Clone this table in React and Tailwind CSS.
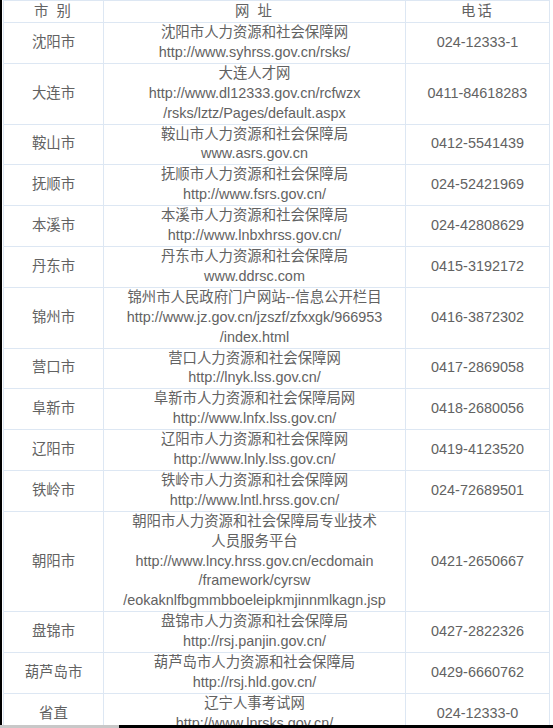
import React from "react";

const rows = [
  ["沈阳市", ["沈阳市人力资源和社会保障网", "http://www.syhrss.gov.cn/rsks/"], "024-12333-1"],
  ["大连市", ["大连人才网", "http://www.dl12333.gov.cn/rcfwzx", "/rsks/lztz/Pages/default.aspx"], "0411-84618283"],
  ["鞍山市", ["鞍山市人力资源和社会保障局", "www.asrs.gov.cn"], "0412-5541439"],
  ["抚顺市", ["抚顺市人力资源和社会保障局", "http://www.fsrs.gov.cn/"], "024-52421969"],
  ["本溪市", ["本溪市人力资源和社会保障局", "http://www.lnbxhrss.gov.cn/"], "024-42808629"],
  ["丹东市", ["丹东市人力资源和社会保障局", "www.ddrsc.com"], "0415-3192172"],
  ["锦州市", ["锦州市人民政府门户网站--信息公开栏目", "http://www.jz.gov.cn/jzszf/zfxxgk/966953", "/index.html"], "0416-3872302"],
  ["营口市", ["营口人力资源和社会保障网", "http://lnyk.lss.gov.cn/"], "0417-2869058"],
  ["阜新市", ["阜新市人力资源和社会保障局网", "http://www.lnfx.lss.gov.cn/"], "0418-2680056"],
  ["辽阳市", ["辽阳市人力资源和社会保障网", "http://www.lnly.lss.gov.cn/"], "0419-4123520"],
  ["铁岭市", ["铁岭市人力资源和社会保障网", "http://www.lntl.hrss.gov.cn/"], "024-72689501"],
  ["朝阳市", ["朝阳市人力资源和社会保障局专业技术", "人员服务平台", "http://www.lncy.hrss.gov.cn/ecdomain", "/framework/cyrsw", "/eokaknlfbgmmbboeleipkmjinnmlkagn.jsp"], "0421-2650667"],
  ["盘锦市", ["盘锦市人力资源和社会保障局", "http://rsj.panjin.gov.cn/"], "0427-2822326"],
  ["葫芦岛市", ["葫芦岛市人力资源和社会保障局", "http://rsj.hld.gov.cn/"], "0429-6660762"],
  ["省直", ["辽宁人事考试网", "http://www.lnrsks.gov.cn/"], "024-12333-0"],
];

export default function App() {
  return (
    <div className="relative w-[553px] h-[728px] overflow-hidden bg-white pl-[3px]">
      <div className="absolute left-0 top-0 w-[2px] h-full bg-black" />
      <table
        className="border-collapse text-[14.4px] leading-[19.9px] text-[#626262] text-center"
        style={{ fontFamily: '"Liberation Sans", Arial, "Noto Sans CJK SC", sans-serif' }}
      >
        <colgroup>
          <col className="w-[100px]" />
          <col className="w-[302px]" />
          <col className="w-[144px]" />
        </colgroup>
        <thead>
          <tr className="h-[22px]">
            <th className="border border-[#dde7f3] font-normal p-0 tracking-[2px]">市 别</th>
            <th className="border border-[#dde7f3] font-normal p-0 tracking-[2px]">网 址</th>
            <th className="border border-[#dde7f3] font-normal p-0 tracking-[2px]">电话</th>
          </tr>
        </thead>
        <tbody>
          {rows.map((r) => (
            <tr key={r[0]}>
              <td className="border border-[#dde7f3] p-0">{r[0]}</td>
              <td className="border border-[#dde7f3] p-0">
                {r[1].map((l, i) => (
                  <div key={i}>{l}</div>
                ))}
              </td>
              <td className="border border-[#dde7f3] p-0">{r[2]}</td>
            </tr>
          ))}
        </tbody>
      </table>
      <div className="absolute left-0 bottom-0 w-full h-[3px] flex">
        <div className="w-[119px] bg-[#c8c8c8]" />
        <div className="flex-1 bg-black" />
      </div>
    </div>
  );
}
